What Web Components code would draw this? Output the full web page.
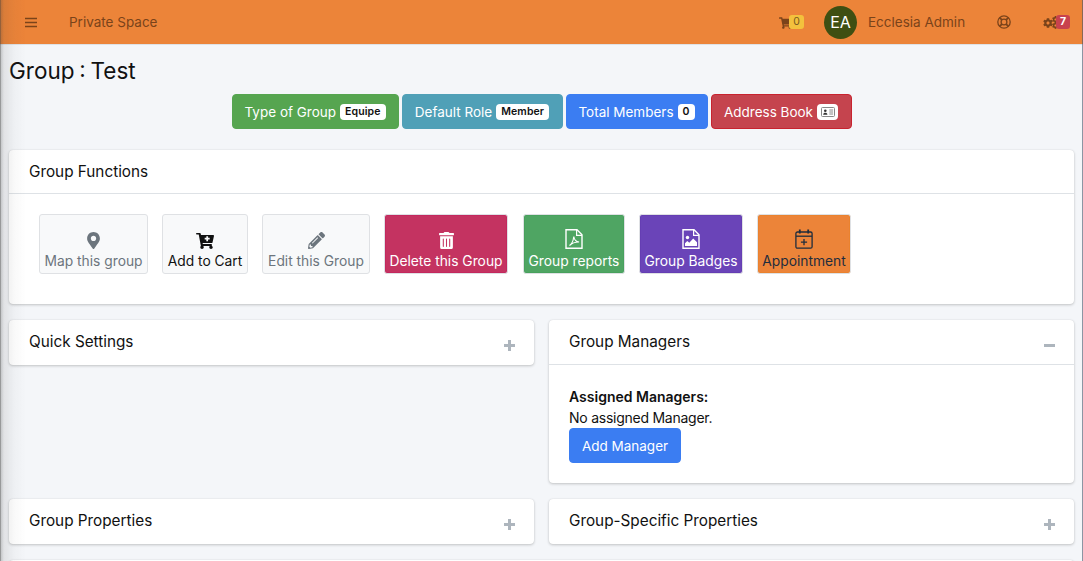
<!DOCTYPE html>
<html lang="en">

<head>
    <meta charset="UTF-8" />
    <title>Group : Test</title>
    <style>
        html,
        body {
            margin: 0;
            background: #f4f6f9;
            font-family: Inter, "Liberation Sans", sans-serif;
            color: #111;
            overflow: hidden;
            height: 561px;
        }

        .shade {
            position: fixed;
            left: 0;
            top: 0;
            bottom: 0;
            width: 26px;
            pointer-events: none;
            background: linear-gradient(90deg, rgba(60, 60, 60, .75) 0, rgba(60, 60, 60, .25) 1px, rgba(60, 60, 60, .1) 4px, rgba(60, 60, 60, .03) 14px, rgba(60, 60, 60, 0) 26px);
        }

        .edge {
            position: fixed;
            right: 0;
            top: 0;
            bottom: 0;
            width: 1px;
            pointer-events: none;
            background: rgba(70, 85, 105, .6);
        }

        main {
            display: block;
            height: 516px;
            overflow: hidden;
            padding: 0 9px;
        }

        h1 {
            margin: 0;
            padding: 12px 0 9px;
            font-size: 22.500px;
            line-height: 28px;
            font-weight: 400;
            word-spacing: -1.500px;
        }

        .summary {
            display: flex;
            justify-content: center;
            gap: 3px;
            margin: 0 0 21px 0;
        }

        .tools {
            display: flex;
            gap: 14px;
        }

        .columns {
            display: grid;
            grid-template-columns: 525px 525px;
            column-gap: 15px;
            align-items: start;
        }

        .assigned {
            font-weight: 600;
            font-size: 14px;
            line-height: 20px;
            margin-top: 2px;
        }

        .none {
            font-size: 14px;
            line-height: 21px;
            letter-spacing: -.25px;
        }
    </style>
</head>

<body>

    <ec-navbar></ec-navbar>

    <main>
        <h1>Group : Test</h1>

        <div class="summary">
            <ec-button color="#56a550" width="167">Type of Group <ec-pill>Equipe</ec-pill></ec-button>
            <ec-button color="#50a0b7" width="161">Default Role <ec-pill>Member</ec-pill></ec-button>
            <ec-button color="#3b7df2" width="142">Total Members <ec-pill>0</ec-pill></ec-button>
            <ec-button color="#c5444e" border="#c8232f" width="141">Address Book <ec-pill tight>
                    <svg width="14" height="10" viewBox="0 0 14 10">
                        <rect x=".5" y=".5" width="13" height="9" rx="1" fill="#fff" stroke="#888" />
                        <circle cx="4.300" cy="3.700" r="1.300" fill="#333" />
                        <path d="M2.200 7.800c0-2.600 4.200-2.600 4.200 0z" fill="#333" />
                        <path d="M8.300 3h3.800M8.300 5h3.800M8.300 7h3.800" stroke="#888" />
                    </svg>
                </ec-pill></ec-button>
        </div>

        <ec-card heading="Group Functions" height="154">
            <div class="tools">
                <ec-tool label="Map this group" width="109" muted>
                    <svg width="13" height="17" viewBox="0 0 384 512" fill="currentColor">
                        <path d="M172.268 501.670C26.970 291.031 0 269.413 0 192 0 85.961 85.961 0 192 0s192 85.961 192 192c0 77.413-26.970 99.031-172.268 309.670-9.535 13.774-29.930 13.773-39.464 0zM192 272c44.183 0 80-35.817 80-80s-35.817-80-80-80-80 35.817-80 80 35.817 80 80 80z" />
                    </svg>
                </ec-tool>
                <ec-tool label="Add to Cart" width="86" color="#111">
                    <svg width="18" height="16" viewBox="0 0 576 512">
                        <path fill="currentColor" d="M504.717 320H211.572l6.545 32h268.418c15.401 0 26.816 14.301 23.403 29.319l-5.517 24.276C523.112 414.668 536 433.828 536 456c0 31.202-25.519 56.743-56.709 55.998-29.708-.72-54.288-24.948-55.091-54.650-.442-16.343 6.140-31.150 16.800-41.348H231.800c10.660 10.198 17.242 25.005 16.800 41.348-.803 29.702-25.383 53.930-55.091 54.650C162.519 512.743 137 487.202 137 456c0-16.706 7.367-31.718 19.036-41.974L87.432 48H24C10.745 48 0 37.255 0 24V24C0 10.745 10.745 0 24 0h102.529c11.401 0 21.228 8.021 23.513 19.190L159.208 64H551.990c15.401 0 26.816 14.301 23.403 29.319l-47.273 208C525.637 312.246 515.923 320 504.717 320z" />
                        <path fill="#f8f9fa" d="M330 100h56v52h52v56h-52v52h-56v-52h-52v-56h52z" />
                    </svg>
                </ec-tool>
                <ec-tool label="Edit this Group" width="108" muted>
                    <svg width="17" height="17" viewBox="0 0 512 512" fill="currentColor">
                        <path d="M497.900 142.100l-46.100 46.100c-4.700 4.700-12.300 4.700-17 0l-111-111c-4.700-4.700-4.700-12.300 0-17l46.100-46.100c18.700-18.700 49.100-18.700 67.900 0l60.100 60.100c18.800 18.700 18.800 49.100 0 67.900zM284.200 99.800L21.600 362.400.4 483.900c-2.900 16.400 11.400 30.600 27.800 27.800l121.500-21.300 262.600-262.600c4.700-4.700 4.700-12.300 0-17l-111-111c-4.800-4.700-12.400-4.700-17.100 0zM124.100 339.900c-5.500-5.500-5.500-14.300 0-19.800l154-154c5.500-5.500 14.300-5.500 19.800 0s5.500 14.300 0 19.800l-154 154c-5.500 5.500-14.300 5.500-19.800 0zM88 424h48v36.300l-64.500 11.300-31.100-31.100L51.700 376H88v48z" />
                    </svg>
                </ec-tool>
                <ec-tool label="Delete this Group" width="124" color="#fff" bg="#c43361" border="#c2185b" style="margin-right:1px">
                    <svg width="15" height="17" viewBox="0 0 448 512" fill="currentColor">
                        <path d="M32 464a48 48 0 0 0 48 48h288a48 48 0 0 0 48-48V128H32zm272-256a16 16 0 0 1 32 0v224a16 16 0 0 1-32 0zm-96 0a16 16 0 0 1 32 0v224a16 16 0 0 1-32 0zm-96 0a16 16 0 0 1 32 0v224a16 16 0 0 1-32 0zM432 32H312l-9.400-18.700A24 24 0 0 0 281.100 0H166.800a23.720 23.720 0 0 0-21.400 13.300L136 32H16A16 16 0 0 0 0 48v32a16 16 0 0 0 16 16h416a16 16 0 0 0 16-16V48a16 16 0 0 0-16-16z" />
                    </svg>
                </ec-tool>
                <ec-tool label="Group reports" width="102" color="#fff" bg="#4fa563" border="#3f9a55">
                    <svg width="18" height="20" viewBox="0 0 18 20" fill="none" stroke="currentColor">
                        <path d="M1 .8h11l5 5v13.400H1z" stroke-width="1.400" />
                        <path d="M11.600 1v5.300H17" stroke-width="1.200" />
                        <path d="M4.500 16.500c2-1.200 3.800-5 4.300-9 .5 3.300 2.500 5.200 5.300 5.500-3.200-.1-7.100 1.100-9.600 3.500z" stroke-width="1.100" />
                    </svg>
                </ec-tool>
                <ec-tool label="Group Badges" width="104" color="#fff" bg="#6a44b8" border="#5f36ad">
                    <svg width="18" height="20" viewBox="0 0 18 20" fill="none" stroke="currentColor">
                        <path d="M1 .8h11l5 5v13.400H1z" stroke-width="1.400" />
                        <path d="M11.600 1v5.300H17" stroke-width="1.200" />
                        <circle cx="5.500" cy="8.500" r="1.700" fill="currentColor" stroke="none" />
                        <path d="M3 17v-2.700l2.300-2.300 2 1.800 3.900-4.300 3.800 3.800V17z" fill="currentColor" stroke="none" />
                    </svg>
                </ec-tool>
                <ec-tool label="Appointment" width="94" color="#1f2d3d" bg="#ec8439" border="#e8801f">
                    <svg width="18" height="20" viewBox="0 0 18 20" fill="none" stroke="currentColor" stroke-width="1.300">
                        <rect x=".9" y="3" width="16.200" height="16.200" rx="1.500" />
                        <path d="M1 7.200h16" />
                        <path d="M4.800 .6v4M13.200 .6v4" stroke-width="1.800" />
                        <path d="M9 10v6.200M5.900 13.100h6.200" />
                    </svg>
                </ec-tool>
            </div>
        </ec-card>

        <div class="columns">
            <ec-card heading="Quick Settings" collapsed></ec-card>
            <ec-card heading="Group Managers" open>
                <div class="assigned">Assigned Managers:</div>
                <div class="none">No assigned Manager.</div>
                <ec-button color="#3b7df2" width="112">Add Manager</ec-button>
            </ec-card>
            <ec-card heading="Group Properties" collapsed></ec-card>
            <ec-card heading="Group-Specific Properties" collapsed></ec-card>
        </div>
        <ec-card heading="" collapsed></ec-card>
    </main>

    <div class="shade"></div>
    <div class="edge"></div>

    <script>
        // top bar with menu toggle, cart, avatar, help and settings
        class EcNavbar extends HTMLElement {
            constructor() {
                super();
                const shadow = this.attachShadow({ mode: 'open' });
                const ink = '#7a431a';
                const cog = 'M487.400 315.700l-42.600-24.600c4.300-23.200 4.300-47 0-70.200l42.600-24.600c4.900-2.800 7.100-8.600 5.500-14-11.100-35.600-30-67.800-54.700-94.600-3.800-4.100-10-5.100-14.800-2.300L380.800 110c-17.900-15.400-38.500-27.300-60.800-35.100V25.800c0-5.600-3.900-10.500-9.400-11.700-36.700-8.200-74.300-7.800-109.200 0-5.500 1.200-9.400 6.100-9.400 11.700V75c-22.200 7.900-42.800 19.800-60.800 35.100L88.700 85.500c-4.900-2.800-11-1.900-14.800 2.300-24.700 26.700-43.600 58.900-54.700 94.600-1.700 5.400.6 11.200 5.500 14L67.300 221c-4.300 23.200-4.300 47 0 70.200l-42.600 24.600c-4.900 2.800-7.100 8.600-5.500 14 11.100 35.600 30 67.800 54.700 94.600 3.800 4.100 10 5.100 14.800 2.300l42.600-24.600c17.900 15.400 38.500 27.300 60.800 35.100v49.200c0 5.600 3.900 10.500 9.400 11.700 36.700 8.200 74.300 7.800 109.200 0 5.500-1.200 9.400-6.100 9.400-11.700v-49.200c22.200-7.900 42.800-19.800 60.800-35.100l42.600 24.600c4.900 2.800 11 1.900 14.800-2.300 24.700-26.700 43.600-58.900 54.700-94.600 1.500-5.500-.7-11.300-5.600-14.100zM256 336c-44.100 0-80-35.900-80-80s35.900-80 80-80 80 35.900 80 80-35.900 80-80 80z';
                shadow.innerHTML = `
                <style>
                    :host {
                        display: flex;
                        align-items: center;
                        height: 44px;
                        background: #ec8439;
                        border-bottom: 1px solid #dee2e6;
                        color: ${ink};
                        font-size: 13.500px;
                    }
                    svg { display: block; flex: none; }
                    .menu { margin-left: 25px; }
                    .brand { margin-left: 32px; }
                    .right { margin-left: auto; display: flex; align-items: center; }
                    .cart { position: relative; width: 25px; height: 14px; margin-right: 20px; }
                    .count {
                        position: absolute;
                        border-radius: 3px;
                        font-size: 10.500px;
                        line-height: 14px;
                        height: 14px;
                        text-align: center;
                        top: 0;
                    }
                    .cart .count { left: 10px; width: 15px; background: #f3c13d; color: #7a5a20; }
                    .avatar {
                        width: 33px;
                        height: 33px;
                        border-radius: 50%;
                        background: #3f4f12;
                        color: #fff;
                        font-size: 16px;
                        line-height: 33px;
                        text-align: center;
                        margin-right: 11px;
                    }
                    .who { width: 97px; margin-right: 32px; white-space: nowrap; }
                    .ring { margin-right: 32px; }
                    .gear { position: relative; width: 27px; height: 14px; margin-right: 13px; }
                    .gear .count { left: 13px; width: 14px; background: #c8424e; color: #fff; font-weight: 700; }
                </style>
                <svg class="menu" width="12" height="11" viewBox="0 0 12 11" fill="${ink}">
                    <path d="M0 .8h12v1.500H0zM0 4.800h12v1.500H0zM0 8.800h12v1.500H0z" />
                </svg>
                <span class="brand">Private Space</span>
                <div class="right">
                    <div class="cart">
                        <svg width="13" height="12" viewBox="0 0 576 512" fill="${ink}" style="margin-top:2px">
                            <path d="M528.120 301.319l47.273-208C578.806 78.301 567.391 64 551.990 64H159.208l-9.166-44.810C147.758 8.021 137.930 0 126.529 0H24C10.745 0 0 10.745 0 24v16c0 13.255 10.745 24 24 24h69.883l70.248 343.435C147.325 417.100 136 435.222 136 456c0 30.928 25.072 56 56 56s56-25.072 56-56c0-15.674-6.447-29.835-16.824-40h209.647C430.447 426.165 424 440.326 424 456c0 30.928 25.072 56 56 56s56-25.072 56-56c0-22.172-12.888-41.332-31.579-50.405l5.517-24.276c3.413-15.018-8.002-29.319-23.403-29.319H218.117l-6.545-32h293.145c11.206 0 20.920-7.754 23.403-18.681z" />
                        </svg>
                        <span class="count">0</span>
                    </div>
                    <div class="avatar">EA</div>
                    <span class="who">Ecclesia Admin</span>
                    <svg class="ring" width="14" height="14" viewBox="0 0 14 14" fill="none" stroke="${ink}" stroke-width="1.300">
                        <circle cx="7" cy="7" r="6.200" />
                        <circle cx="7" cy="7" r="2.900" />
                        <path d="M2.600 2.600l2.300 2.300M11.400 2.600L9.100 4.900M2.600 11.400l2.300-2.300M11.400 11.400L9.100 9.100" stroke-width="1.800" />
                    </svg>
                    <div class="gear">
                        <svg width="10" height="10" viewBox="0 0 512 512" fill="${ink}" style="position:absolute;left:0;top:3px"><path d="${cog}" /></svg>
                        <svg width="7" height="7" viewBox="0 0 512 512" fill="${ink}" style="position:absolute;left:9px;top:1px"><path d="${cog}" /></svg>
                        <svg width="7" height="7" viewBox="0 0 512 512" fill="${ink}" style="position:absolute;left:9px;top:7px"><path d="${cog}" /></svg>
                        <span class="count">7</span>
                    </div>
                </div>
            `;
            }
        }

        // solid button, used for the summary row and Add Manager
        class EcButton extends HTMLElement {
            constructor() {
                super();
                const shadow = this.attachShadow({ mode: 'open' });
                const color = this.getAttribute('color');
                const border = this.getAttribute('border') || color;
                shadow.innerHTML = `
                <style>
                    :host {
                        display: inline-flex;
                        align-items: center;
                        justify-content: center;
                        gap: 4px;
                        box-sizing: border-box;
                        width: ${this.getAttribute('width')}px;
                        height: 35px;
                        background: ${color};
                        border: 1px solid ${border};
                        border-radius: 4px;
                        color: #fff;
                        font-size: 13.500px;
                        white-space: nowrap;
                    }
                </style>
                <slot></slot>
            `;
            }
        }

        class EcPill extends HTMLElement {
            constructor() {
                super();
                const shadow = this.attachShadow({ mode: 'open' });
                shadow.innerHTML = `
                <style>
                    :host {
                        display: inline-flex;
                        align-items: center;
                        justify-content: center;
                        box-sizing: border-box;
                        height: 16px;
                        min-width: 16px;
                        padding: 0 ${this.hasAttribute('tight') ? 3.5 : 5}px;
                        background: #fff;
                        border-radius: 4px;
                        color: #111;
                        font-size: 10.500px;
                        font-weight: 600;
                        letter-spacing: .1px;
                    }
                </style>
                <slot></slot>
            `;
            }
        }

        // white card with a title bar and a +/- collapse mark
        class EcCard extends HTMLElement {
            constructor() {
                super();
                const shadow = this.attachShadow({ mode: 'open' });
                const collapsed = this.hasAttribute('collapsed');
                const fixed = this.hasAttribute('height');
                const mark = collapsed
                    ? '<path d="M0 3.900h4V0h3v3.900h4v3H7V11H4V6.900H0z" />'
                    : '<path d="M0 4h11v3H0z" />';
                shadow.innerHTML = `
                <style>
                    :host {
                        display: block;
                        background: #fff;
                        border-radius: 4px;
                        box-shadow: 0 0 1px rgba(0, 0, 0, .125), 0 1px 3px rgba(0, 0, 0, .2);
                        margin-bottom: 16px;
                        ${fixed ? 'height:' + this.getAttribute('height') + 'px;' : ''}
                    }
                    header {
                        display: flex;
                        align-items: center;
                        justify-content: space-between;
                        box-sizing: border-box;
                        height: ${fixed ? 44 : 45}px;
                        padding: 0 19px 0 20px;
                        font-size: 15.300px;
                        color: #111;
                        ${collapsed ? '' : 'border-bottom: 1px solid #dee2e6;'}
                    }
                    h3 { margin: 0 0 ${fixed ? 0 : 2}px; font: inherit; }
                    svg { display: block; margin: 6px 0 0; fill: #adb5bd; }
                    .body { ${collapsed ? 'display:none;' : ''} padding: ${fixed ? '20px 30px' : '20px'}; }
                </style>
                <header>
                    <h3>${this.getAttribute('heading')}</h3>
                    ${fixed ? '' : `<svg width="11" height="11" viewBox="0 0 11 11">${mark}</svg>`}
                </header>
                <div class="body"><slot></slot></div>
            `;
            }
        }

        // big tile: icon above a label
        class EcTool extends HTMLElement {
            constructor() {
                super();
                const shadow = this.attachShadow({ mode: 'open' });
                const muted = this.hasAttribute('muted');
                const bg = this.getAttribute('bg') || '#f8f9fa';
                const color = muted ? '#6c757d' : this.getAttribute('color');
                const edge = this.getAttribute('border');
                shadow.innerHTML = `
                <style>
                    :host {
                        display: flex;
                        flex-direction: column;
                        align-items: center;
                        justify-content: flex-end;
                        box-sizing: border-box;
                        width: ${this.getAttribute('width')}px;
                        height: 60px;
                        padding-bottom: 2px;
                        background: ${bg};
                        border: 1px solid #dfe1e4;
                        border-radius: 3px;
                        color: ${color};
                        font-size: 13.800px;
                        white-space: nowrap;
                        ${edge ? 'box-shadow: inset 0 0 0 1px ' + edge + '66;' : ''}
                    }
                    span { line-height: 20px; margin-top: 2px; }
                </style>
                <slot></slot>
                <span>${this.getAttribute('label')}</span>
            `;
            }
        }

        customElements.define('ec-navbar', EcNavbar);
        customElements.define('ec-button', EcButton);
        customElements.define('ec-pill', EcPill);
        customElements.define('ec-card', EcCard);
        customElements.define('ec-tool', EcTool);
    </script>

</body>

</html>
